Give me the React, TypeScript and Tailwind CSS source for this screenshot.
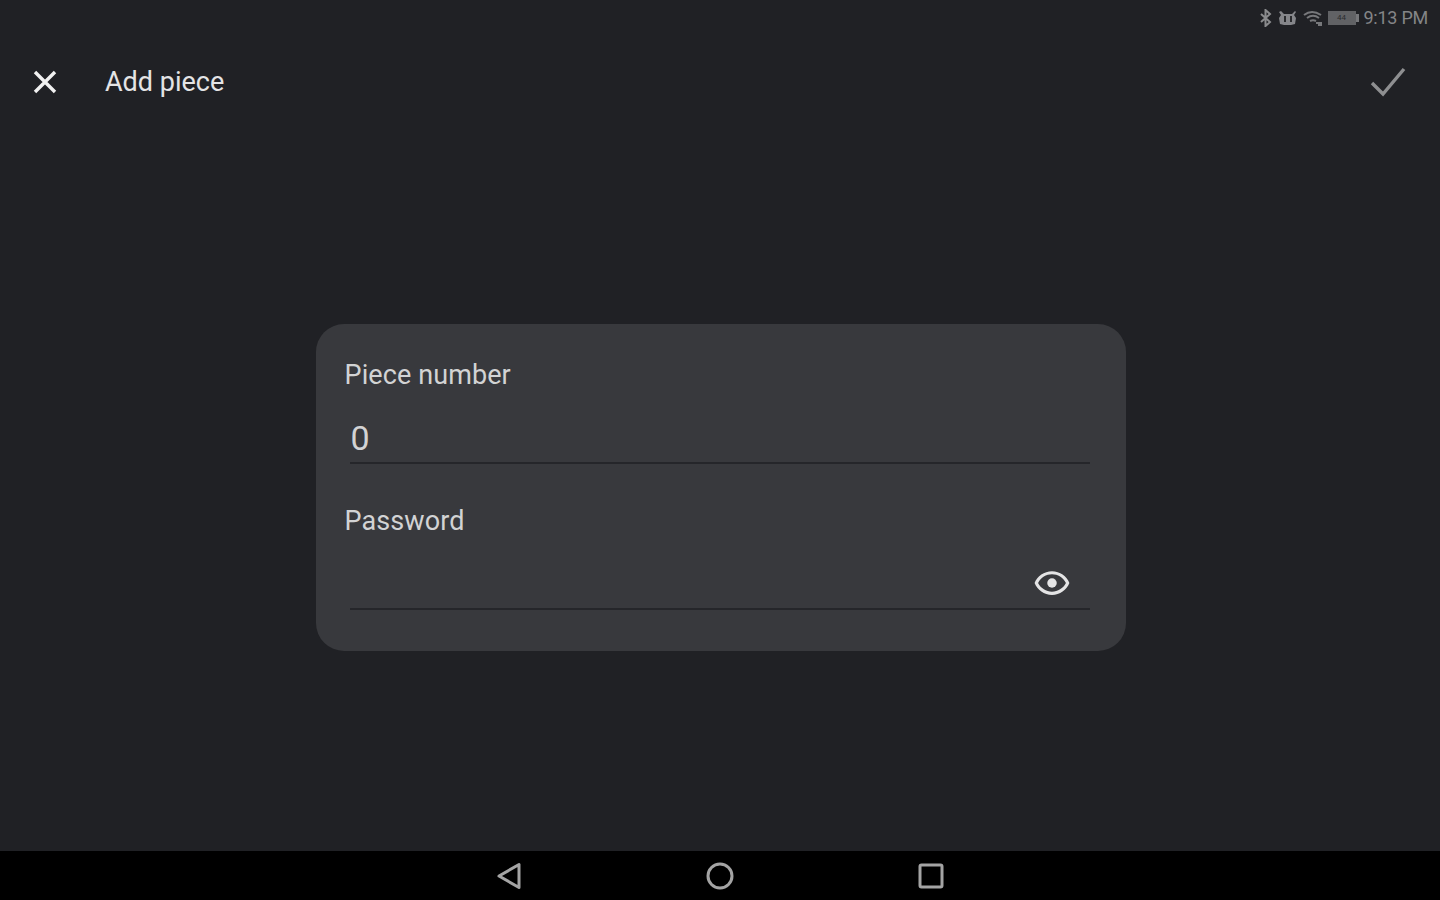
import { useState } from 'react'

function BluetoothIcon() {
  return (
    <svg width="14" height="18" viewBox="0 0 14 18" fill="none" stroke="#8a8b8d" strokeWidth="2">
      <path d="M2 5l9 8-4.5 4V1L11 5l-9 8" />
    </svg>
  )
}

function MuteIcon() {
  return (
    <svg width="20" height="16" viewBox="0 0 20 16" fill="#85868a">
      <path d="M3 1l3 3h8l3-3 1 1-2 3 2 3-1 6-4 1H6l-4-1-1-6 2-3-2-3z" />
      <rect x="6" y="6" width="2" height="6" fill="#2b2c2f" />
      <rect x="12" y="6" width="2" height="6" fill="#2b2c2f" />
    </svg>
  )
}

function WifiIcon() {
  return (
    <svg width="20" height="16" viewBox="0 0 20 16" fill="none" stroke="#77787b" strokeWidth="2">
      <path d="M1 5c5-4 11-4 17 0M4 8c4-3 8-3 12 0M7 11c2-1 4-1 6 0M13 13h6M15 15h4" />
    </svg>
  )
}

function BatteryIcon() {
  return (
    <div className="flex items-center">
      <div className="flex h-[14px] w-[28px] items-center justify-center bg-[#616265] text-[8px] leading-none text-[#2c2d30]">
        44
      </div>
      <div className="h-[8px] w-[3px] bg-[#77787b]" />
    </div>
  )
}

function Field({ label, value, eye }: { label: string; value?: string; eye?: boolean }) {
  return (
    <div>
      <label className="block text-[27px] leading-[30px] tracking-[0.1px] text-[#d2d3d4]">{label}</label>
      <div className="mt-[19px] ml-[5px] mr-[7px] flex h-[55px] items-center justify-between border-b-2 border-[#25262a]">
        <span className="pt-[4px] pl-[1px] text-[34px] leading-none text-[#d2d3d4]">{value}</span>
        {eye && (
          <svg className="mr-[19px] mt-[3px]" width="38" height="38" viewBox="0 0 24 24" fill="#e4e4e5">
            <path d="M12 4.5C7 4.5 2.7 7.6 1 12c1.7 4.4 6 7.5 11 7.5s9.3-3.1 11-7.5c-1.7-4.4-6-7.5-11-7.5zM12 17.5c-3.7 0-7-2.1-8.8-5.5C5 8.6 8.3 6.5 12 6.5s7 2.1 8.8 5.5c-1.8 3.4-5.1 5.5-8.8 5.5z" />
            <circle cx="12" cy="12" r="3" />
          </svg>
        )}
      </div>
    </div>
  )
}

export default function App() {
  const [pieces] = useState({ number: '0' })

  return (
    <div className="flex h-[900px] w-[1440px] flex-col bg-[#202125] font-['Roboto','Liberation_Sans',sans-serif]">
      {/* status bar */}
      <div className="flex h-9 items-center justify-end gap-[5px] pr-[12px] text-[#848587]">
        <BluetoothIcon />
        <MuteIcon />
        <WifiIcon />
        <BatteryIcon />
        <span className="text-[18px] leading-none tracking-[-0.25px]">9:13 PM</span>
      </div>

      {/* toolbar */}
      <header className="flex h-[92px] items-center pl-[28px] pr-[34px]">
        <svg width="34" height="34" viewBox="0 0 34 34" fill="none" stroke="#f1f1f1" strokeWidth="3.4">
          <path d="M7 7l20 20M27 7L7 27" />
        </svg>
        <h1 className="ml-[43px] flex-1 text-[27px] leading-none text-[#e4e4e5]">Add piece</h1>
        <svg width="36" height="30" viewBox="0 0 36 30" fill="none" stroke="#8e8f91" strokeWidth="3.4">
          <path d="M2 16l11 11L34 2" />
        </svg>
      </header>

      {/* form */}
      <main className="flex flex-1 items-center justify-center pb-[4px] pl-[1px]">
        <section className="h-[327px] w-[810px] rounded-[28px] bg-[#38393d] pt-[36px] pl-[29px] pr-[29px]">
          <Field label="Piece number" value={pieces.number} />
          <div className="mt-[42px]">
            <Field label="Password" eye />
          </div>
        </section>
      </main>

      {/* nav bar */}
      <nav className="flex h-[49px] items-center justify-center gap-[184px] bg-black">
        <svg width="26" height="28" viewBox="0 0 26 28" fill="none" stroke="#a4a4a4" strokeWidth="3" strokeLinejoin="round">
          <path d="M23 2.5v23L3 14z" />
        </svg>
        <svg width="28" height="28" viewBox="0 0 28 28" fill="none" stroke="#a4a4a4" strokeWidth="3">
          <circle cx="14" cy="14" r="12" />
        </svg>
        <svg width="26" height="26" viewBox="0 0 26 26" fill="none" stroke="#a4a4a4" strokeWidth="3" strokeLinejoin="round">
          <rect x="2" y="2" width="22" height="22" rx="1.5" />
        </svg>
      </nav>
    </div>
  )
}
